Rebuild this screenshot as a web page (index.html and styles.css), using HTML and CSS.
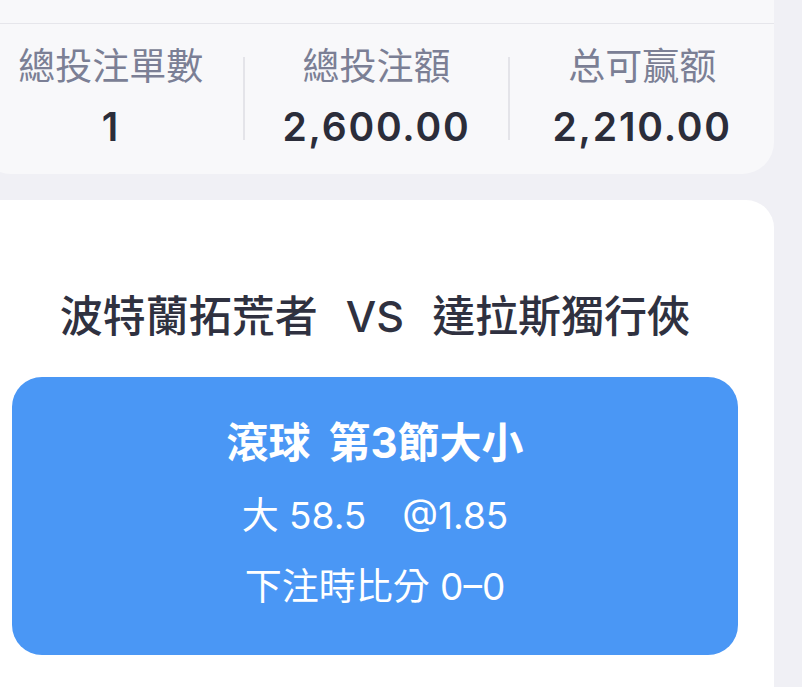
FILE: index.html
```html
<!DOCTYPE html>
<html lang="zh-Hant">
<head>
<meta charset="utf-8">
<title>注單</title>
<link rel="stylesheet" href="styles.css">
</head>
<body>
  <section class="summary">
    <div class="summary-top"></div>
    <div class="stats">
      <div class="stat">
        <div class="stat-label">總投注單數</div>
        <div class="stat-value">1</div>
      </div>
      <div class="divider"></div>
      <div class="stat">
        <div class="stat-label">總投注額</div>
        <div class="stat-value">2,600.00</div>
      </div>
      <div class="divider"></div>
      <div class="stat">
        <div class="stat-label">总可赢额</div>
        <div class="stat-value">2,210.00</div>
      </div>
    </div>
  </section>

  <section class="bet-card">
    <h2 class="match">波特蘭拓荒者<span class="vs">VS</span>達拉斯獨行俠</h2>
    <div class="bet-box">
      <div class="bet-title">滾球 第3節大小</div>
      <div class="bet-line">大 58.5<span class="odds">@1.85</span></div>
      <div class="bet-line">下注時比分 0–0</div>
    </div>
  </section>
</body>
</html>
```

FILE: styles.css
```css
html, body {
  margin: 0;
  padding: 0;
  background: #f0f0f5;
  font-family: Inter, "Noto Sans CJK TC", sans-serif;
  overflow: hidden;
}

.summary {
  margin-left: -21px;
  margin-right: 28px;
  background: #f8f8fa;
  border-radius: 0 0 32px 32px;
}

.summary-top {
  height: 23px;
  border-bottom: 1px solid #e6e6eb;
}

.stats {
  display: grid;
  grid-template-columns: 1fr 2px 1fr 2px 1fr;
  align-items: center;
  padding: 21px 0 23px;
}

.stat {
  display: flex;
  flex-direction: column;
  align-items: center;
  gap: 14px;
}

.stat-label {
  font-size: 37px;
  line-height: 44px;
  color: #7b7f95;
  font-weight: 400;
}

.stat-value {
  font-size: 39px;
  line-height: 48px;
  font-weight: 600;
  color: #2b2d3a;
  letter-spacing: 1.8px;
}

.divider {
  width: 2px;
  height: 83px;
  background: #e4e4e9;
}

.bet-card {
  margin: 26px 28px 0 -21px;
  background: #ffffff;
  border-radius: 0 28px 0 0;
  padding: 88px 36px 60px 33px;
}

.match {
  margin: 0;
  text-align: center;
  font-size: 43px;
  line-height: 56px;
  font-weight: 500;
  color: #2f3140;
}

.vs {
  margin: 0 28px;
}

.bet-box {
  margin-top: 33px;
  background: #4a97f5;
  border-radius: 30px;
  padding: 38px 0 44px;
  display: flex;
  flex-direction: column;
  align-items: center;
  color: #ffffff;
}

.bet-title {
  font-size: 42px;
  line-height: 56px;
  font-weight: 700;
  word-spacing: 8px;
}

.bet-line {
  font-size: 37px;
  line-height: 48px;
  font-weight: 400;
  margin-top: 21px;
}

.bet-line + .bet-line {
  margin-top: 23px;
}

.odds {
  margin-left: 36px;
}
```
